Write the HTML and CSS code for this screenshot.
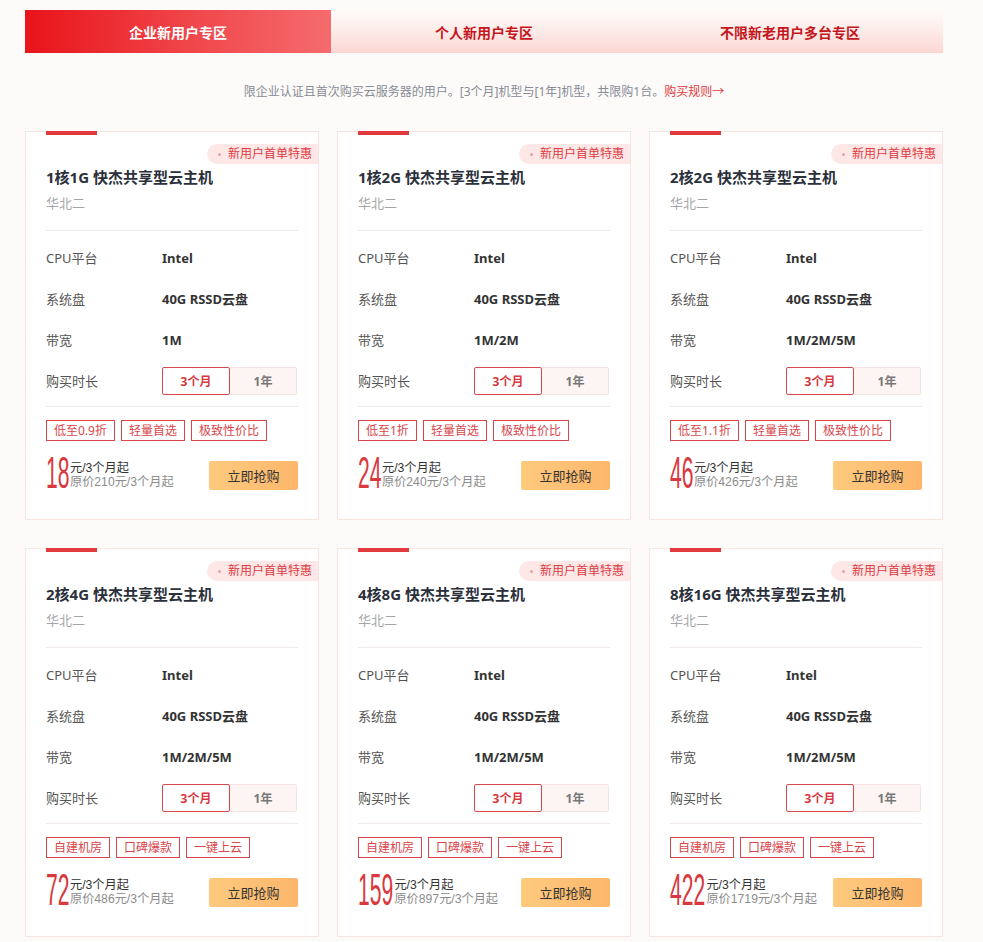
FILE: index.html
```html
<!DOCTYPE html>
<html lang="zh-CN">
<head>
<meta charset="utf-8">
<title>企业新用户专区</title>
<link rel="stylesheet" href="styles.css">
</head>
<body>
<div class="page">
  <div class="tabs">
    <div class="tab active">企业新用户专区</div>
    <div class="tab">个人新用户专区</div>
    <div class="tab">不限新老用户多台专区</div>
  </div>
  <p class="notice">限企业认证且首次购买云服务器的用户。[3个月]机型与[1年]机型，共限购1台。<a class="rule">购买规则→</a></p>

  <div class="grid">
    <div class="card">
      <span class="bar"></span><span class="badge">新用户首单特惠</span>
      <h3 class="title">1核1G 快杰共享型云主机</h3>
      <div class="region">华北二</div>
      <div class="specs">
        <div class="row"><span class="label">CPU平台</span><span class="value">Intel</span></div>
        <div class="row"><span class="label">系统盘</span><span class="value">40G RSSD云盘</span></div>
        <div class="row"><span class="label">带宽</span><span class="value">1M</span></div>
        <div class="row"><span class="label">购买时长</span><div class="toggle"><span class="opt on">3个月</span><span class="opt">1年</span></div></div>
      </div>
      <div class="tags"><span class="tag">低至0.9折</span><span class="tag">轻量首选</span><span class="tag">极致性价比</span></div>
      <div class="buy">
        <div class="price"><span class="num n2">18</span><div class="ptext"><span class="unit">元/3个月起</span><span class="orig">原价210元/3个月起</span></div></div>
        <button class="btn">立即抢购</button>
      </div>
    </div>

    <div class="card">
      <span class="bar"></span><span class="badge">新用户首单特惠</span>
      <h3 class="title">1核2G 快杰共享型云主机</h3>
      <div class="region">华北二</div>
      <div class="specs">
        <div class="row"><span class="label">CPU平台</span><span class="value">Intel</span></div>
        <div class="row"><span class="label">系统盘</span><span class="value">40G RSSD云盘</span></div>
        <div class="row"><span class="label">带宽</span><span class="value">1M/2M</span></div>
        <div class="row"><span class="label">购买时长</span><div class="toggle"><span class="opt on">3个月</span><span class="opt">1年</span></div></div>
      </div>
      <div class="tags"><span class="tag">低至1折</span><span class="tag">轻量首选</span><span class="tag">极致性价比</span></div>
      <div class="buy">
        <div class="price"><span class="num n2">24</span><div class="ptext"><span class="unit">元/3个月起</span><span class="orig">原价240元/3个月起</span></div></div>
        <button class="btn">立即抢购</button>
      </div>
    </div>

    <div class="card">
      <span class="bar"></span><span class="badge">新用户首单特惠</span>
      <h3 class="title">2核2G 快杰共享型云主机</h3>
      <div class="region">华北二</div>
      <div class="specs">
        <div class="row"><span class="label">CPU平台</span><span class="value">Intel</span></div>
        <div class="row"><span class="label">系统盘</span><span class="value">40G RSSD云盘</span></div>
        <div class="row"><span class="label">带宽</span><span class="value">1M/2M/5M</span></div>
        <div class="row"><span class="label">购买时长</span><div class="toggle"><span class="opt on">3个月</span><span class="opt">1年</span></div></div>
      </div>
      <div class="tags"><span class="tag">低至1.1折</span><span class="tag">轻量首选</span><span class="tag">极致性价比</span></div>
      <div class="buy">
        <div class="price"><span class="num n2">46</span><div class="ptext"><span class="unit">元/3个月起</span><span class="orig">原价426元/3个月起</span></div></div>
        <button class="btn">立即抢购</button>
      </div>
    </div>

    <div class="card">
      <span class="bar"></span><span class="badge">新用户首单特惠</span>
      <h3 class="title">2核4G 快杰共享型云主机</h3>
      <div class="region">华北二</div>
      <div class="specs">
        <div class="row"><span class="label">CPU平台</span><span class="value">Intel</span></div>
        <div class="row"><span class="label">系统盘</span><span class="value">40G RSSD云盘</span></div>
        <div class="row"><span class="label">带宽</span><span class="value">1M/2M/5M</span></div>
        <div class="row"><span class="label">购买时长</span><div class="toggle"><span class="opt on">3个月</span><span class="opt">1年</span></div></div>
      </div>
      <div class="tags"><span class="tag">自建机房</span><span class="tag">口碑爆款</span><span class="tag">一键上云</span></div>
      <div class="buy">
        <div class="price"><span class="num n2">72</span><div class="ptext"><span class="unit">元/3个月起</span><span class="orig">原价486元/3个月起</span></div></div>
        <button class="btn">立即抢购</button>
      </div>
    </div>

    <div class="card">
      <span class="bar"></span><span class="badge">新用户首单特惠</span>
      <h3 class="title">4核8G 快杰共享型云主机</h3>
      <div class="region">华北二</div>
      <div class="specs">
        <div class="row"><span class="label">CPU平台</span><span class="value">Intel</span></div>
        <div class="row"><span class="label">系统盘</span><span class="value">40G RSSD云盘</span></div>
        <div class="row"><span class="label">带宽</span><span class="value">1M/2M/5M</span></div>
        <div class="row"><span class="label">购买时长</span><div class="toggle"><span class="opt on">3个月</span><span class="opt">1年</span></div></div>
      </div>
      <div class="tags"><span class="tag">自建机房</span><span class="tag">口碑爆款</span><span class="tag">一键上云</span></div>
      <div class="buy">
        <div class="price"><span class="num n3">159</span><div class="ptext"><span class="unit">元/3个月起</span><span class="orig">原价897元/3个月起</span></div></div>
        <button class="btn">立即抢购</button>
      </div>
    </div>

    <div class="card">
      <span class="bar"></span><span class="badge">新用户首单特惠</span>
      <h3 class="title">8核16G 快杰共享型云主机</h3>
      <div class="region">华北二</div>
      <div class="specs">
        <div class="row"><span class="label">CPU平台</span><span class="value">Intel</span></div>
        <div class="row"><span class="label">系统盘</span><span class="value">40G RSSD云盘</span></div>
        <div class="row"><span class="label">带宽</span><span class="value">1M/2M/5M</span></div>
        <div class="row"><span class="label">购买时长</span><div class="toggle"><span class="opt on">3个月</span><span class="opt">1年</span></div></div>
      </div>
      <div class="tags"><span class="tag">自建机房</span><span class="tag">口碑爆款</span><span class="tag">一键上云</span></div>
      <div class="buy">
        <div class="price"><span class="num n3">422</span><div class="ptext"><span class="unit">元/3个月起</span><span class="orig">原价1719元/3个月起</span></div></div>
        <button class="btn">立即抢购</button>
      </div>
    </div>
  </div>
</div>
</body>
</html>
```

FILE: styles.css
```css
* { box-sizing: border-box; }
html, body { margin: 0; padding: 0; }
body {
  background: #fdfbf9;
  font-family: "Noto Sans", "Noto Sans CJK SC", sans-serif;
  color: #333;
}
.page {
  width: 918px;
  margin-left: 25px;
  padding-top: 10px;
}
.tabs {
  display: flex;
  height: 43px;
}
.tab {
  flex: 1;
  display: flex;
  align-items: center;
  justify-content: center;
  font-size: 14px;
  font-weight: 700;
  color: #c4161c;
  background: linear-gradient(180deg, #fefbf9 0%, #fde9e6 55%, #fbd6d3 100%);
}
.tab.active {
  color: #fff;
  background: linear-gradient(90deg, #e8141a 0%, #f0474b 55%, #f56b6d 100%);
}
.notice {
  margin: 30px 0 0;
  text-align: center;
  font-size: 12px;
  line-height: 18px;
  color: #878b95;
}
.rule { color: #e0393e; }
.grid {
  margin-top: 30px;
  display: grid;
  grid-template-columns: repeat(3, 294px);
  column-gap: 18px;
  row-gap: 28px;
}
.card {
  position: relative;
  background: #fff;
  border: 1px solid #f8e4e1;
  padding: 34px 20px 30px;
}
.bar {
  position: absolute;
  top: -1px;
  left: 20px;
  width: 51px;
  height: 4px;
  background: #e0393e;
}
.badge {
  position: absolute;
  top: 12px;
  right: 0;
  height: 20px;
  line-height: 20px;
  padding: 0 6px 0 21px;
  border-radius: 10px 0 0 10px;
  background: #fde7e7;
  color: #e0393e;
  font-size: 12px;
}
.badge::before {
  content: "";
  position: absolute;
  left: 11px;
  top: 9px;
  width: 3px;
  height: 3px;
  border-radius: 50%;
  background: #e8a2a2;
}
.title {
  margin: 0;
  font-size: 15px;
  line-height: 22px;
  font-weight: 700;
  color: #2b303b;
}
.region {
  margin-top: 5px;
  font-size: 13px;
  line-height: 20px;
  color: #a6a6a6;
  padding-bottom: 17px;
  border-bottom: 1px solid #f0ebea;
}
.specs { padding-top: 6px; }
.row {
  display: flex;
  align-items: center;
  height: 41px;
  font-size: 13px;
}
.label {
  width: 116px;
  color: #555;
}
.value {
  font-weight: 700;
  color: #333;
}
.toggle {
  display: flex;
  width: 135px;
  height: 28px;
}
.opt {
  flex: 1;
  display: flex;
  align-items: center;
  justify-content: center;
  font-size: 12px;
  font-weight: 700;
  color: #777;
  background: #fdf4f4;
  border: 1px solid #f6e3e3;
  border-left: none;
  border-radius: 0 2px 2px 0;
}
.opt.on {
  color: #d9383e;
  background: #fff;
  border: 1px solid #d9484d;
  border-radius: 2px;
}
.tags {
  margin-top: 5px;
  padding-top: 13px;
  border-top: 1px solid #f0ebea;
  display: flex;
  gap: 6px;
}
.tag {
  height: 21px;
  line-height: 19px;
  padding: 0 7px;
  border: 1px solid #d8464b;
  color: #d8464b;
  font-size: 12px;
}
.buy {
  margin-top: 16px;
  display: flex;
  align-items: flex-end;
  justify-content: space-between;
}
.price {
  display: flex;
  align-items: flex-end;
}
.num {
  display: inline-block;
  font-family: "Liberation Sans", sans-serif;
  font-size: 44px;
  line-height: 32px;
  height: 32px;
  color: #d8383e;
  transform: scaleX(0.48);
  transform-origin: left center;
}
.num.n2 { margin-right: -25px; }
.num.n3 { margin-right: -37px; }
.ptext {
  display: flex;
  flex-direction: column;
  font-family: "Liberation Sans", "Noto Sans CJK SC", sans-serif;
  font-size: 12.2px;
  line-height: 14px;
}
.unit { color: #333; }
.orig { color: #8c8c8c; }
.btn {
  width: 89px;
  height: 29px;
  margin-bottom: -1px;
  border: none;
  border-radius: 2px;
  background: linear-gradient(90deg, #fdca7e 0%, #fdb76b 100%);
  font-family: "Noto Sans", "Noto Sans CJK SC", sans-serif;
  font-size: 13px;
  color: #333;
  padding: 0;
}
```
